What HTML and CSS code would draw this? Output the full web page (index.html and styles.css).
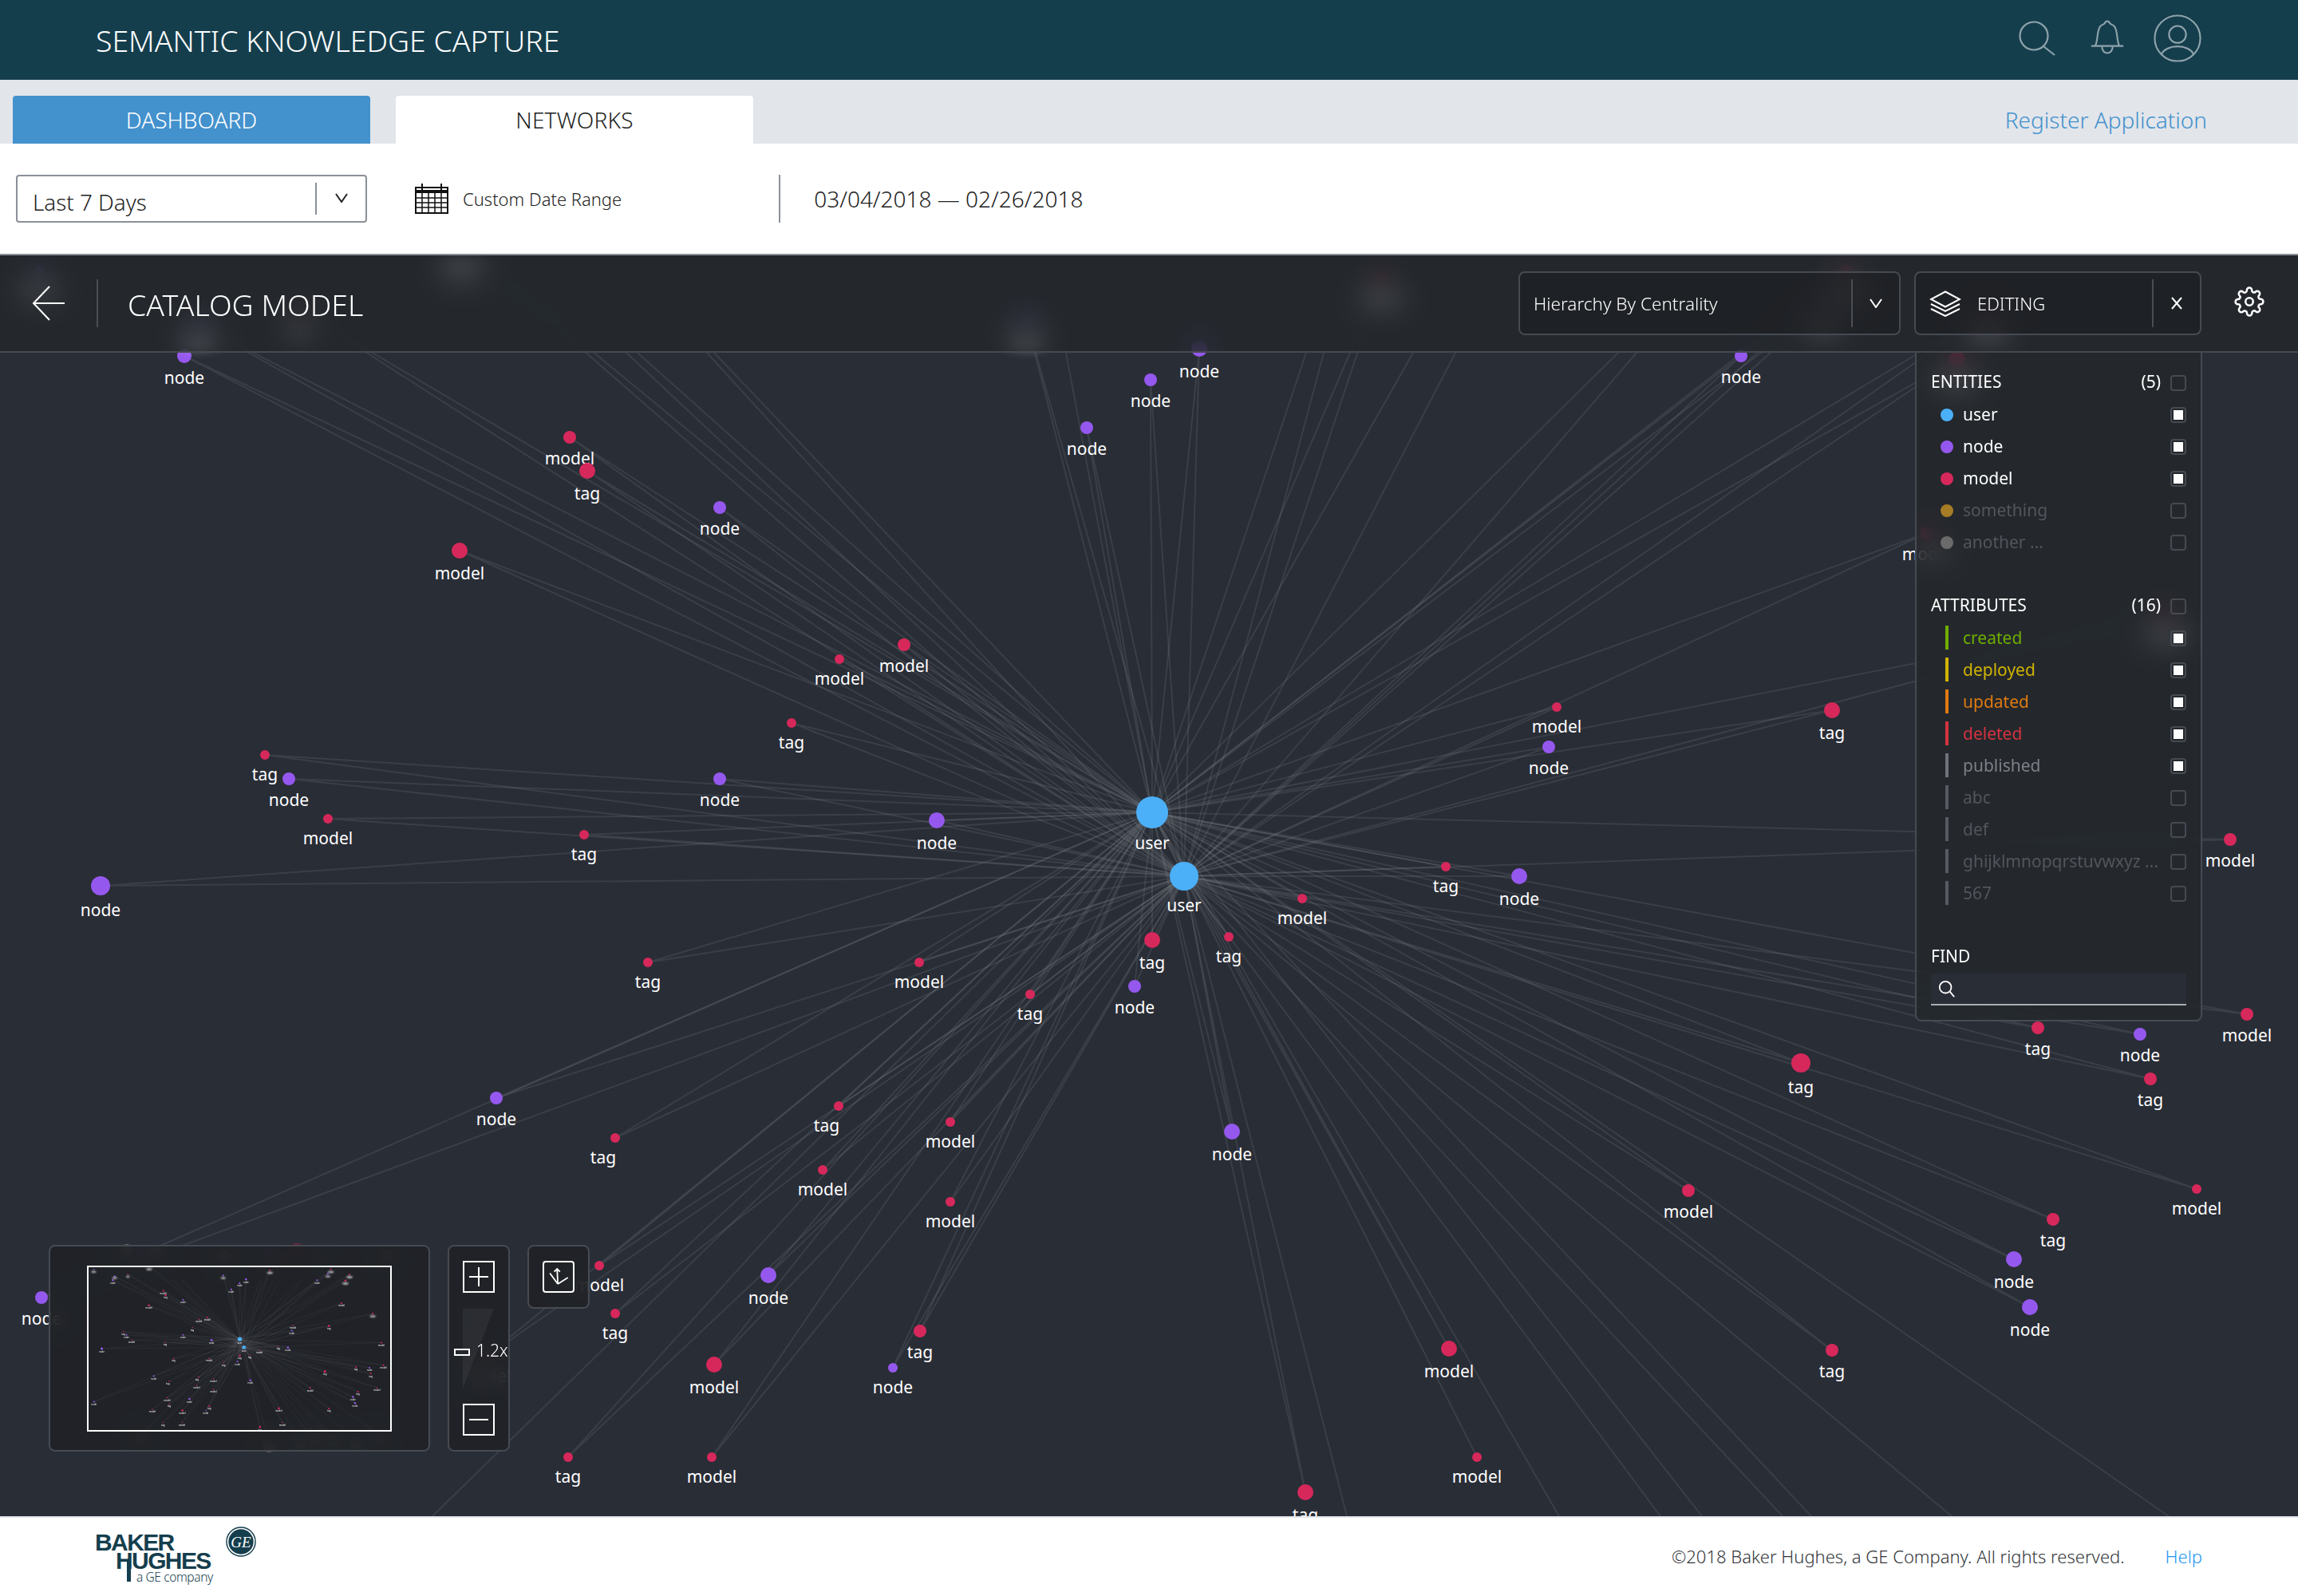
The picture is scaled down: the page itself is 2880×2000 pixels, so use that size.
FILE: index.html
```html
<!DOCTYPE html>
<html lang="en">
<head>
<meta charset="utf-8">
<title>Semantic Knowledge Capture</title>
<link rel="stylesheet" href="styles.css">
</head>
<body>
<div class="page">
  <header class="topbar">
    <div class="app-title">SEMANTIC KNOWLEDGE CAPTURE</div>
    <div class="top-icons">
      <svg class="ti ti-search" viewBox="0 0 60 60"><circle cx="25" cy="25" r="17.5"/><path d="M37 38L51 49"/></svg>
      <svg class="ti ti-bell" viewBox="0 0 48 50"><path d="M3 35H45M8 35C12 30 10 14 15 9C17 7 20 7 21 5C22 2 26 2 27 5C28 7 31 7 33 9C38 14 36 30 40 35"/><path d="M17 36C17 47 31 47 31 36"/></svg>
      <svg class="ti ti-user" viewBox="0 0 62 62"><circle cx="31" cy="31" r="29.5"/><circle cx="31" cy="26" r="11"/><path d="M10 52C16 38 46 38 52 52"/></svg>
    </div>
  </header>

  <nav class="tabstrip">
    <div class="tab tab-blue">DASHBOARD</div>
    <div class="tab tab-white">NETWORKS</div>
    <a class="register">Register Application</a>
  </nav>

  <section class="filters">
    <div class="range-select">
      <span class="range-text">Last 7 Days</span>
      <span class="range-div"></span>
      <span class="range-chev"><svg class="chev chev-dark" viewBox="0 0 16 12"><path d="M1 1L8 11L15 1"/></svg></span>
    </div>
    <svg class="cal" viewBox="0 0 42 38">
      <path class="cal-top" d="M1 5H41V37H1ZM9 0V8M33 0V8"/>
      <path class="cal-band" d="M1 8H41V12H1Z"/>
      <path class="cal-grid" d="M1 18H41M1 24H41M1 30H41M9 12V37M17 12V37M25 12V37M33 12V37"/>
    </svg>
    <span class="custom-label">Custom Date Range</span>
    <span class="filter-div"></span>
    <span class="date-range">03/04/2018 — 02/26/2018</span>
  </section>

  <main class="canvas">
    <svg class="graph" viewBox="0 320 2880 1580" aria-label="network graph">
      <g id="graph">
        <g class="edges">
          <path d="M1444 1018L231 446L1484 1098"/><path d="M1444 1018L714 548L1484 1098"/><path d="M1444 1018L736 590L1484 1098"/>
          <path d="M1444 1018L902 636L1484 1098"/><path d="M1444 1018L576 690L1484 1098"/><path d="M1444 1018L1133 808L1484 1098"/>
          <path d="M1444 1018L1052 826L1484 1098"/><path d="M1444 1018L992 906L1484 1098"/><path d="M1444 1018L332 946L1484 1098"/>
          <path d="M1444 1018L362 976L1484 1098"/><path d="M1444 1018L902 976L1484 1098"/><path d="M1444 1018L411 1026L1484 1098"/>
          <path d="M1444 1018L1174 1028L1484 1098"/><path d="M1444 1018L732 1046L1484 1098"/><path d="M1444 1018L126 1110L1484 1098"/>
          <path d="M1444 1018L1362 536L1484 1098"/><path d="M1444 1018L1442 476L1484 1098"/><path d="M1444 1018L1503 437L1484 1098"/>
          <path d="M1444 1018L2182 446L1484 1098"/><path d="M1444 1018L1951 886L1484 1098"/><path d="M1444 1018L1941 936L1484 1098"/>
          <path d="M1444 1018L2296 890L1484 1098"/><path d="M1444 1018L1812 1086L1484 1098"/><path d="M1444 1018L1904 1098L1484 1098"/>
          <path d="M1444 1018L2795 1052L1484 1098"/><path d="M1444 1018L812 1206L1484 1098"/><path d="M1444 1018L1152 1206L1484 1098"/>
          <path d="M1444 1018L1291 1246L1484 1098"/><path d="M1444 1018L1422 1236L1484 1098"/><path d="M1444 1018L1444 1178L1484 1098"/>
          <path d="M1444 1018L1540 1174L1484 1098"/><path d="M1444 1018L1632 1126L1484 1098"/><path d="M1444 1018L622 1376L1484 1098"/>
          <path d="M1444 1018L771 1426L1484 1098"/><path d="M1444 1018L1051 1386L1484 1098"/><path d="M1444 1018L1191 1406L1484 1098"/>
          <path d="M1444 1018L1031 1466L1484 1098"/><path d="M1444 1018L1191 1506L1484 1098"/><path d="M1444 1018L751 1586L1484 1098"/>
          <path d="M1444 1018L771 1646L1484 1098"/><path d="M1444 1018L963 1598L1484 1098"/><path d="M1444 1018L52 1626L1484 1098"/>
          <path d="M1444 1018L895 1710L1484 1098"/><path d="M1444 1018L1153 1668L1484 1098"/><path d="M1444 1018L1119 1714L1484 1098"/>
          <path d="M1444 1018L712 1826L1484 1098"/><path d="M1444 1018L892 1826L1484 1098"/><path d="M1444 1018L1544 1418L1484 1098"/>
          <path d="M1444 1018L2116 1492L1484 1098"/><path d="M1444 1018L2257 1332L1484 1098"/><path d="M1444 1018L2554 1288L1484 1098"/>
          <path d="M1444 1018L2682 1296L1484 1098"/><path d="M1444 1018L2816 1271L1484 1098"/><path d="M1444 1018L2695 1352L1484 1098"/>
          <path d="M1444 1018L2753 1490L1484 1098"/><path d="M1444 1018L2573 1528L1484 1098"/><path d="M1444 1018L2524 1578L1484 1098"/>
          <path d="M1444 1018L2544 1638L1484 1098"/><path d="M1444 1018L2296 1692L1484 1098"/><path d="M1444 1018L1816 1690L1484 1098"/>
          <path d="M1444 1018L1851 1826L1484 1098"/><path d="M1444 1018L1636 1870L1484 1098"/>
          <path d="M1444 1018L578 305L1484 1098"/><path d="M1444 1018L249 407L1484 1098"/><path d="M1444 1018L375 388L1484 1098"/>
          <path d="M1444 1018L1286 400L1484 1098"/><path d="M1444 1018L1732 349L1484 1098"/><path d="M1444 1018L2314 340L1484 1098"/>
          <path d="M1444 1018L2285 383L1484 1098"/><path d="M1444 1018L2492 390L1484 1098"/><path d="M1444 1018L2453 450L1484 1098"/>
          <path d="M1444 1018L2415 668L1484 1098"/><path d="M1444 1018L2714 770L1484 1098"/><path d="M1444 1018L609 1700L1484 1098"/>
          <path d="M785 442L1484 1098"/><path d="M799 442L1444 1018"/><path d="M886 442L1484 1098"/><path d="M895 442L1444 1018"/>
          <path d="M1336 442L1444 1018"/><path d="M1637 442L1444 1018"/><path d="M1659 442L1484 1098"/><path d="M1771 442L1444 1018"/>
          <path d="M1824 442L1484 1098"/><path d="M2028 442L1444 1018"/><path d="M2051 442L1484 1098"/>
          <path d="M542 1900L1444 1018"/><path d="M1688 1900L1484 1098"/><path d="M1954 1900L1444 1018"/><path d="M2081 1900L1484 1098"/>
          <path d="M2133 1900L1444 1018"/><path d="M2234 1900L1484 1098"/><path d="M2270 1900L1444 1018"/><path d="M2446 1900L1484 1098"/>
          <path d="M2718 1900L1444 1018"/>
          <path d="M1444 1018L1484 1098"/>
        </g>
        <g class="nodes">
          <circle class="c-node" cx="231" cy="446" r="9"/><text x="231" y="480">node</text>
          <circle class="c-model" cx="714" cy="548" r="8"/><text x="714" y="581">model</text>
          <circle class="c-model" cx="736" cy="590" r="10"/><text x="736" y="625">tag</text>
          <circle class="c-node" cx="902" cy="636" r="8"/><text x="902" y="669">node</text>
          <circle class="c-model" cx="576" cy="690" r="10"/><text x="576" y="725">model</text>
          <circle class="c-model" cx="1133" cy="808" r="8"/><text x="1133" y="841">model</text>
          <circle class="c-model" cx="1052" cy="826" r="6"/><text x="1052" y="857">model</text>
          <circle class="c-model" cx="992" cy="906" r="6"/><text x="992" y="937">tag</text>
          <circle class="c-model" cx="332" cy="946" r="6"/><text x="332" y="977">tag</text>
          <circle class="c-node" cx="362" cy="976" r="8"/><text x="362" y="1009">node</text>
          <circle class="c-node" cx="902" cy="976" r="8"/><text x="902" y="1009">node</text>
          <circle class="c-model" cx="411" cy="1026" r="6"/><text x="411" y="1057">model</text>
          <circle class="c-node" cx="1174" cy="1028" r="10"/><text x="1174" y="1063">node</text>
          <circle class="c-model" cx="732" cy="1046" r="6"/><text x="732" y="1077">tag</text>
          <circle class="c-node" cx="126" cy="1110" r="12"/><text x="126" y="1147">node</text>
          <circle class="c-node" cx="1362" cy="536" r="8"/><text x="1362" y="569">node</text>
          <circle class="c-node" cx="1442" cy="476" r="8"/><text x="1442" y="509">node</text>
          <circle class="c-node" cx="1503" cy="437" r="10"/><text x="1503" y="472">node</text>
          <circle class="c-node" cx="2182" cy="446" r="8"/><text x="2182" y="479">node</text>
          <circle class="c-model" cx="1951" cy="886" r="6"/><text x="1951" y="917">model</text>
          <circle class="c-node" cx="1941" cy="936" r="8"/><text x="1941" y="969">node</text>
          <circle class="c-model" cx="2296" cy="890" r="10"/><text x="2296" y="925">tag</text>
          <circle class="c-model" cx="1812" cy="1086" r="6"/><text x="1812" y="1117">tag</text>
          <circle class="c-node" cx="1904" cy="1098" r="10"/><text x="1904" y="1133">node</text>
          <circle class="c-model" cx="2795" cy="1052" r="8"/><text x="2795" y="1085">model</text>
          <circle class="c-model" cx="812" cy="1206" r="6"/><text x="812" y="1237">tag</text>
          <circle class="c-model" cx="1152" cy="1206" r="6"/><text x="1152" y="1237">model</text>
          <circle class="c-model" cx="1291" cy="1246" r="6"/><text x="1291" y="1277">tag</text>
          <circle class="c-node" cx="1422" cy="1236" r="8"/><text x="1422" y="1269">node</text>
          <circle class="c-model" cx="1444" cy="1178" r="10"/><text x="1444" y="1213">tag</text>
          <circle class="c-model" cx="1540" cy="1174" r="6"/><text x="1540" y="1205">tag</text>
          <circle class="c-model" cx="1632" cy="1126" r="6"/><text x="1632" y="1157">model</text>
          <circle class="c-user" cx="1444" cy="1018" r="20"/><text x="1444" y="1063">user</text>
          <circle class="c-user" cx="1484" cy="1098" r="18"/><text x="1484" y="1141">user</text>
          <circle class="c-node" cx="622" cy="1376" r="8"/><text x="622" y="1409">node</text>
          <circle class="c-model" cx="771" cy="1426" r="6"/><text x="756" y="1457">tag</text>
          <circle class="c-model" cx="1051" cy="1386" r="6"/><text x="1036" y="1417">tag</text>
          <circle class="c-model" cx="1191" cy="1406" r="6"/><text x="1191" y="1437">model</text>
          <circle class="c-model" cx="1031" cy="1466" r="6"/><text x="1031" y="1497">model</text>
          <circle class="c-model" cx="1191" cy="1506" r="6"/><text x="1191" y="1537">model</text>
          <circle class="c-model" cx="751" cy="1586" r="6"/><text x="751" y="1617">model</text>
          <circle class="c-model" cx="771" cy="1646" r="6"/><text x="771" y="1677">tag</text>
          <circle class="c-node" cx="963" cy="1598" r="10"/><text x="963" y="1633">node</text>
          <circle class="c-node" cx="52" cy="1626" r="8"/><text x="52" y="1659">node</text>
          <circle class="c-model" cx="895" cy="1710" r="10"/><text x="895" y="1745">model</text>
          <circle class="c-model" cx="1153" cy="1668" r="8"/><text x="1153" y="1701">tag</text>
          <circle class="c-node" cx="1119" cy="1714" r="6"/><text x="1119" y="1745">node</text>
          <circle class="c-model" cx="712" cy="1826" r="6"/><text x="712" y="1857">tag</text>
          <circle class="c-model" cx="892" cy="1826" r="6"/><text x="892" y="1857">model</text>
          <circle class="c-node" cx="1544" cy="1418" r="10"/><text x="1544" y="1453">node</text>
          <circle class="c-model" cx="2116" cy="1492" r="8"/><text x="2116" y="1525">model</text>
          <circle class="c-model" cx="2257" cy="1332" r="12"/><text x="2257" y="1369">tag</text>
          <circle class="c-model" cx="2554" cy="1288" r="8"/><text x="2554" y="1321">tag</text>
          <circle class="c-node" cx="2682" cy="1296" r="8"/><text x="2682" y="1329">node</text>
          <circle class="c-model" cx="2816" cy="1271" r="8"/><text x="2816" y="1304">model</text>
          <circle class="c-model" cx="2695" cy="1352" r="8"/><text x="2695" y="1385">tag</text>
          <circle class="c-model" cx="2753" cy="1490" r="6"/><text x="2753" y="1521">model</text>
          <circle class="c-model" cx="2573" cy="1528" r="8"/><text x="2573" y="1561">tag</text>
          <circle class="c-node" cx="2524" cy="1578" r="10"/><text x="2524" y="1613">node</text>
          <circle class="c-node" cx="2544" cy="1638" r="10"/><text x="2544" y="1673">node</text>
          <circle class="c-model" cx="2296" cy="1692" r="8"/><text x="2296" y="1725">tag</text>
          <circle class="c-model" cx="1816" cy="1690" r="10"/><text x="1816" y="1725">model</text>
          <circle class="c-model" cx="1851" cy="1826" r="6"/><text x="1851" y="1857">model</text>
          <circle class="c-model" cx="1636" cy="1870" r="10"/><text x="1636" y="1905">tag</text>
          <circle class="c-model" cx="2415" cy="668" r="8"/><text x="2415" y="701">model</text>
          <circle class="c-model" cx="609" cy="1700" r="6"/><text x="609" y="1731">model</text>
          <circle class="c-model" cx="578" cy="305" r="6"/><ellipse class="smudge" cx="578" cy="340" rx="28" ry="8"/>
          <circle class="c-node" cx="49" cy="340" r="6"/><ellipse class="smudge" cx="49" cy="364" rx="24" ry="8"/>
          <circle class="c-node" cx="249" cy="407" r="8"/><ellipse class="smudge" cx="249" cy="424" rx="24" ry="8"/>
          <circle class="c-model" cx="375" cy="388" r="6"/><ellipse class="smudge" cx="375" cy="412" rx="14" ry="8"/>
          <circle class="c-node" cx="1286" cy="400" r="8"/><ellipse class="smudge" cx="1286" cy="424" rx="24" ry="8"/>
          <circle class="c-model" cx="1732" cy="349" r="8"/><ellipse class="smudge" cx="1732" cy="375" rx="28" ry="8"/>
          <circle class="c-model" cx="2314" cy="340" r="8"/><ellipse class="smudge" cx="2314" cy="366" rx="28" ry="8"/>
          <circle class="c-node" cx="2285" cy="383" r="8"/><ellipse class="smudge" cx="2285" cy="409" rx="24" ry="8"/>
          <circle class="c-model" cx="2492" cy="390" r="8"/><ellipse class="smudge" cx="2492" cy="416" rx="28" ry="8"/>
          <circle class="c-model" cx="2453" cy="450" r="10"/><ellipse class="smudge" cx="2453" cy="478" rx="28" ry="8"/>
          <circle class="c-model" cx="2714" cy="770" r="8"/><ellipse class="smudge" cx="2714" cy="796" rx="28" ry="8"/>
        </g>
      </g>
      <g class="ghosts">
        <circle cx="159" cy="1567" r="8"/><circle class="g-node" cx="178" cy="1572" r="8"/><circle cx="194" cy="1570" r="8"/>
        <circle cx="281" cy="1575" r="8"/><circle class="g-node" cx="334" cy="1572" r="8"/><circle class="g-model" cx="356" cy="1577" r="8"/>
        <circle class="g-model" cx="372" cy="1565" r="8"/><circle class="g-node" cx="405" cy="1577" r="8"/><circle cx="485" cy="1575" r="8"/>
        <circle cx="178" cy="1800" r="8"/><circle class="g-model" cx="326" cy="1797" r="8"/><circle cx="337" cy="1812" r="8"/>
        <circle cx="375" cy="1808" r="8"/><circle cx="395" cy="1803" r="8"/><circle cx="418" cy="1805" r="8"/>
        <circle cx="446" cy="1808" r="8"/><circle cx="474" cy="1801" r="8"/>
      </g>
    </svg>

    <div class="canvas-head">
      <svg class="back" viewBox="0 0 42 44"><path d="M41 22H2M22 1L2 22L22 43"/></svg>
      <span class="head-div"></span>
      <h1 class="catalog">CATALOG MODEL</h1>
      <div class="dark-select hierarchy">
        <span class="ds-text">Hierarchy By Centrality</span>
        <span class="ds-div"></span>
        <span class="ds-end"><svg class="chev chev-light" viewBox="0 0 16 12"><path d="M1 1L8 11L15 1"/></svg></span>
      </div>
      <div class="dark-select editing">
        <svg class="layers" viewBox="0 0 40 33"><path d="M20 1.5L38 11L20 20.5L2 11Z"/><path d="M2 17L20 26L38 17"/><path d="M2 23L20 32L38 23"/></svg>
        <span class="ds-text editing-text">EDITING</span>
        <span class="ds-div"></span>
        <span class="ds-end"><svg class="close" viewBox="0 0 16 16"><path d="M2 1L14 15M14 1L2 15"/></svg></span>
      </div>
      <svg class="gear" viewBox="0 0 24 24"><circle cx="12" cy="12" r="3"/><path d="M19.4 15a1.65 1.65 0 0 0 .33 1.82l.06.06a2 2 0 0 1 0 2.83 2 2 0 0 1-2.83 0l-.06-.06a1.65 1.65 0 0 0-1.82-.33 1.65 1.65 0 0 0-1 1.51V21a2 2 0 0 1-2 2 2 2 0 0 1-2-2v-.09A1.65 1.65 0 0 0 9 19.4a1.65 1.65 0 0 0-1.82.33l-.06.06a2 2 0 0 1-2.83 0 2 2 0 0 1 0-2.83l.06-.06a1.65 1.65 0 0 0 .33-1.82 1.65 1.65 0 0 0-1.51-1H3a2 2 0 0 1-2-2 2 2 0 0 1 2-2h.09A1.65 1.65 0 0 0 4.6 9a1.65 1.65 0 0 0-.33-1.82l-.06-.06a2 2 0 0 1 0-2.83 2 2 0 0 1 2.83 0l.06.06a1.65 1.65 0 0 0 1.82.33H9a1.65 1.65 0 0 0 1-1.51V3a2 2 0 0 1 2-2 2 2 0 0 1 2 2v.09a1.65 1.65 0 0 0 1 1.51 1.65 1.65 0 0 0 1.82-.33l.06-.06a2 2 0 0 1 2.83 0 2 2 0 0 1 0 2.83l-.06.06a1.65 1.65 0 0 0-.33 1.82V9a1.65 1.65 0 0 0 1.51 1H21a2 2 0 0 1 2 2 2 2 0 0 1-2 2h-.09a1.65 1.65 0 0 0-1.51 1z"/></svg>
    </div>

    <aside class="legend">
      <div class="lg-row lg-head"><span class="lg-title">ENTITIES</span><span class="lg-count">(5)</span><span class="cb"></span></div>
      <div class="lg-row"><i class="dot d-user"></i><span class="lg-name">user</span><span class="cb on"></span></div>
      <div class="lg-row"><i class="dot d-node"></i><span class="lg-name">node</span><span class="cb on"></span></div>
      <div class="lg-row"><i class="dot d-model"></i><span class="lg-name">model</span><span class="cb on"></span></div>
      <div class="lg-row"><i class="dot d-something"></i><span class="lg-name off">something</span><span class="cb"></span></div>
      <div class="lg-row"><i class="dot d-another"></i><span class="lg-name off">another ...</span><span class="cb"></span></div>

      <div class="lg-row lg-head lg-gap"><span class="lg-title">ATTRIBUTES</span><span class="lg-count">(16)</span><span class="cb"></span></div>
      <div class="lg-row"><i class="bar b-created"></i><span class="lg-name t-created">created</span><span class="cb on"></span></div>
      <div class="lg-row"><i class="bar b-deployed"></i><span class="lg-name t-deployed">deployed</span><span class="cb on"></span></div>
      <div class="lg-row"><i class="bar b-updated"></i><span class="lg-name t-updated">updated</span><span class="cb on"></span></div>
      <div class="lg-row"><i class="bar b-deleted"></i><span class="lg-name t-deleted">deleted</span><span class="cb on"></span></div>
      <div class="lg-row"><i class="bar b-published"></i><span class="lg-name t-published">published</span><span class="cb on"></span></div>
      <div class="lg-row"><i class="bar b-off"></i><span class="lg-name off">abc</span><span class="cb"></span></div>
      <div class="lg-row"><i class="bar b-off"></i><span class="lg-name off">def</span><span class="cb"></span></div>
      <div class="lg-row"><i class="bar b-off"></i><span class="lg-name off">ghijklmnopqrstuvwxyz ...</span><span class="cb"></span></div>
      <div class="lg-row"><i class="bar b-off"></i><span class="lg-name off">567</span><span class="cb"></span></div>

      <div class="lg-row lg-head lg-gap"><span class="lg-title">FIND</span></div>
      <div class="find">
        <svg class="find-icon" viewBox="0 0 24 24"><circle cx="10" cy="10" r="8"/><path d="M16 16L22 23"/></svg>
      </div>
    </aside>

    <div class="dock">
      <div class="minimap panel">
        <div class="viewport">
          <svg class="mini-svg" viewBox="0 320 2880 1580" preserveAspectRatio="none"><use href="#graph"/></svg>
        </div>
      </div>
      <div class="zoombar panel">
        <span class="zbtn"><svg class="zglyph" viewBox="0 0 24 24"><path d="M0 12H24M12 0V24"/></svg></span>
        <div class="slider">
          <svg class="wedge" viewBox="0 0 40 100" preserveAspectRatio="none"><path d="M0 0H39L0 100Z"/></svg>
          <span class="handle"></span>
          <span class="zoom-val">1.2x</span>
        </div>
        <span class="zbtn"><svg class="zglyph" viewBox="0 0 24 24"><path d="M0 12H24"/></svg></span>
      </div>
      <div class="locate panel">
        <span class="lbtn"><svg class="axes" viewBox="0 0 40 40"><path d="M19 30L18 9M14 13L18 9L22 13M19 30L8 15M19 30L33 21"/></svg></span>
      </div>
    </div>
  </main>

  <footer class="footer">
    <div class="logo">
      <div class="logo-word">
        <span class="bh bh-baker">BAKER</span>
        <span class="bh bh-hughes">HUGHES</span>
        <span class="bh-stem"></span>
        <span class="bh-sub">a GE company</span>
      </div>
      <svg class="ge" viewBox="0 0 40 40"><circle class="ge-ring" cx="20" cy="20" r="19"/><circle class="ge-fill" cx="20" cy="20" r="16.5"/><text class="ge-text" x="20" y="27">GE</text></svg>
    </div>
    <div class="foot-right">
      <span class="copyright">©2018 Baker Hughes, a GE Company. All rights reserved.</span>
      <a class="help">Help</a>
    </div>
  </footer>
</div>
</body>
</html>
```
FILE: styles.css
```css
* { box-sizing: border-box; }
html, body { margin: 0; padding: 0; background: #fff; }
body { font-family: "Noto Sans", "Open Sans", sans-serif; color: #222; }
.page { width: 2880px; height: 2000px; display: flex; flex-direction: column; overflow: hidden; }

.topbar { height: 100px; background: #153e4d; display: flex; align-items: center; justify-content: space-between; padding: 0 121px 0 120px; flex: none; }
.app-title { font-size: 37.4px; font-weight: 300; color: #fff; }
.top-icons { display: flex; align-items: center; }
.ti { fill: none; stroke: #8ea3ab; stroke-width: 2.2; display: block; }
.ti-search { width: 60px; height: 60px; }
.ti-bell { width: 46px; height: 48px; margin-left: 34px; margin-top: -4px; }
.ti-user { width: 60px; height: 60px; margin-left: 35px; margin-top: -4px; }

.tabstrip { height: 80px; background: #e2e5ea; display: flex; align-items: flex-end; padding: 0 114px 0 16px; flex: none; }
.tab { width: 448px; height: 60px; display: flex; align-items: center; justify-content: center; font-size: 28px; font-weight: 300; border-radius: 4px 4px 0 0; margin-right: 32px; }
.tab-blue { background: #4391cd; color: #fff; }
.tab-white { background: #fff; color: #1d1f22; letter-spacing: 0.2px; }
.register { margin-left: auto; height: 60px; display: flex; align-items: center; color: #4391cd; font-size: 28px; font-weight: 300; }

.filters { height: 140px; background: #fff; border-bottom: 2px solid #8b9098; display: flex; align-items: center; padding: 0 0 0 20px; flex: none; }
.range-select { width: 440px; height: 60px; border: 2px solid #8b9098; border-radius: 4px; display: flex; align-items: center; padding-left: 19px; }
.range-text { flex: 1; font-size: 27.8px; font-weight: 300; margin-top: 8px; }
.range-div { width: 2px; height: 40px; background: #8b9098; }
.range-chev { width: 61px; display: flex; justify-content: center; }
.chev { width: 16px; height: 12px; fill: none; stroke-width: 2; display: block; }
.chev-dark { stroke: #222; margin-top: -2px; }
.chev-light { stroke: #fff; }
.cal { width: 42px; height: 38px; margin-left: 60px; fill: none; display: block; }
.cal-top { stroke: #111; stroke-width: 2; }
.cal-band { fill: #111; }
.cal-grid { stroke: #111; stroke-width: 1.5; }
.custom-label { font-size: 22px; font-weight: 300; margin-left: 18px; }
.filter-div { width: 2px; height: 60px; background: #8b9098; margin-left: 197px; }
.date-range { font-size: 28px; font-weight: 300; margin-left: 42px; }

.canvas { position: relative; height: 1580px; background: #292d36; overflow: hidden; flex: none; }
.graph { position: absolute; inset: 0; width: 2880px; height: 1580px; display: block; }
.edges path { fill: none; stroke: rgba(130, 135, 140, 0.2); stroke-width: var(--edge-w, 2); }
.nodes text { fill: #fff; font-size: 21px; text-anchor: middle; transform: translateY(0.5px); }
.nodes .smudge { fill: rgba(255, 255, 255, 0.9); filter: blur(9px); }
.c-user { fill: #4bb0f8; }
.c-node { fill: #9558ee; }
.c-model { fill: #d6285b; }
.ghosts circle { fill: #666; }
.ghosts .g-node { fill: #4a3c7c; }
.ghosts .g-model { fill: #552a3a; }

.canvas-head { position: absolute; top: 0; left: 0; width: 2880px; height: 122px; display: flex; align-items: center; padding-left: 40px; background: rgba(34, 38, 41, 0.7); backdrop-filter: blur(16px); border-bottom: 2px solid #464a50; }
.back { width: 42px; height: 44px; fill: none; stroke: #fff; stroke-width: 2; display: block; }
.head-div { width: 2px; height: 60px; background: #4a4d52; margin-left: 39px; }
.catalog { margin: 3px 0 0 37px; font-size: 37.4px; font-weight: 300; color: #fff; }
.dark-select { height: 80px; border: 2px solid #464a52; border-radius: 8px; background: rgba(28, 30, 34, 0.6); display: flex; align-items: center; padding-left: 17px; }
.hierarchy { width: 479px; margin-left: auto; }
.editing { width: 360px; margin-left: 17px; }
.ds-text { flex: 1; color: #fff; font-size: 22.5px; font-weight: 300; }
.ds-div { width: 2px; height: 60px; background: #4a4d52; }
.ds-end { width: 58px; display: flex; justify-content: center; }
.layers { width: 40px; height: 33px; fill: none; stroke: #fff; stroke-width: 2; display: block; }
.editing-text { margin-left: 20px; font-size: 22px; }
.close { width: 16px; height: 16px; fill: none; stroke: #fff; stroke-width: 2; display: block; }
.gear { width: 38px; height: 38px; margin: -4px 42px 0 41px; fill: none; stroke: #fff; stroke-width: 1.6; display: block; }

.legend { position: absolute; left: 2400px; top: 122px; width: 360px; height: 838px; padding: 18px 18px 0; background: rgba(34, 38, 41, 0.7); backdrop-filter: blur(16px); border: 2px solid #464a52; border-top: 0; border-radius: 0 0 8px 8px; }
.lg-row { height: 40px; display: flex; align-items: center; font-size: 21px; color: #fff; }
.lg-gap { margin-top: 40px; }
.lg-title { flex: 1; margin-top: -4px; }
.lg-count { margin: -4px 12px 0 0; }
.lg-name { flex: 1; margin: -3px 0 0 12px; white-space: nowrap; }
.bar + .lg-name { margin-left: 18px; }
.off { color: #52565d; }
.dot { width: 16px; height: 16px; border-radius: 50%; margin-left: 12px; flex: none; }
.d-user { background: #4bb0f8; }
.d-node { background: #9558ee; }
.d-model { background: #d6285b; }
.d-something { background: #a67c25; }
.d-another { background: #6b6b6b; }
.bar { width: 4px; height: 30px; margin-left: 18px; flex: none; margin-top: -2px; }
.b-created { background: #6fae00; }
.b-deployed { background: #d1b400; }
.b-updated { background: #e07a10; }
.b-deleted { background: #d4333f; }
.b-published { background: #6f737b; }
.b-off { background: #565a62; }
.t-created { color: #6fae00; }
.t-deployed { color: #d1b400; }
.t-updated { color: #e07a10; }
.t-deleted { color: #d4333f; }
.t-published { color: #7c8088; }
.cb { width: 20px; height: 20px; flex: none; border: 2px solid #464a52; border-radius: 4px; display: flex; align-items: center; justify-content: center; }
.cb.on::after { content: ""; width: 12px; height: 12px; background: #fff; }
.find { height: 40px; background: #292d36; border-bottom: 2px solid #a9adb4; display: flex; align-items: center; padding-left: 9px; }
.find-icon { width: 22px; height: 22px; fill: none; stroke: #fff; stroke-width: 2; display: block; }

.dock { position: absolute; left: 61px; top: 1240px; display: flex; gap: 22px; align-items: flex-start; }
.panel { border: 2px solid #464a52; border-radius: 8px; background: rgba(30, 33, 37, 0.85); backdrop-filter: blur(14px); }
.minimap { width: 478px; height: 259px; display: flex; align-items: center; justify-content: center; }
.viewport { width: 382px; height: 208px; border: 2px solid #fff; }
.mini-svg { --edge-w: 3.5; width: 100%; height: 100%; display: block; overflow: hidden; }
.zoombar { width: 78px; height: 259px; display: flex; flex-direction: column; align-items: center; padding: 18px 0; justify-content: space-between; }
.zbtn { width: 40px; height: 40px; border: 2px solid #fff; display: flex; align-items: center; justify-content: center; }
.zglyph { width: 24px; height: 24px; fill: none; stroke: #fff; stroke-width: 2; display: block; }
.slider { position: relative; width: 40px; height: 100px; }
.wedge { width: 40px; height: 100px; display: block; fill: rgba(255, 255, 255, 0.05); }
.handle { position: absolute; left: -11px; top: 50px; width: 20px; height: 9px; border: 2px solid #fff; background: #24282d; }
.zoom-val { position: absolute; left: 17px; top: 38px; font-size: 21px; font-weight: 300; color: #fff; }
.locate { width: 78px; height: 80px; display: flex; align-items: center; justify-content: center; }
.lbtn { width: 40px; height: 40px; border: 2px solid #fff; border-radius: 4px; display: block; }
.axes { width: 36px; height: 36px; fill: none; stroke: #fff; stroke-width: 2; display: block; }

.footer { height: 100px; background: #fff; border-top: 2px solid #e2e5ea; display: flex; align-items: center; justify-content: space-between; padding: 0 120px 0 119px; flex: none; }
.logo { display: flex; align-items: flex-start; }
.logo-word { position: relative; width: 148px; height: 70px; color: #153e4d; font-family: "Liberation Sans", sans-serif; }
.bh { position: absolute; font-weight: 700; font-size: 30px; line-height: 22px; letter-spacing: -1.6px; }
.bh-baker { left: 0; top: 6px; }
.bh-hughes { left: 26px; top: 29px; }
.bh-stem { position: absolute; left: 40px; top: 40px; width: 5px; height: 26px; background: #153e4d; }
.bh-sub { position: absolute; left: 52px; top: 52px; font-family: "Noto Sans", sans-serif; font-size: 15.5px; line-height: 16px; font-weight: 300; white-space: nowrap; letter-spacing: -0.4px; }
.ge { width: 38px; height: 38px; margin: -3px 0 0 16px; display: block; }
.ge-ring { fill: none; stroke: #153e4d; stroke-width: 1.5; }
.ge-fill { fill: #153e4d; }
.ge-text { fill: #fff; font-family: "Liberation Serif", serif; font-style: italic; font-size: 20px; text-anchor: middle; }
.foot-right { display: flex; align-items: center; margin-top: -2px; }
.copyright { font-size: 22px; font-weight: 300; color: #33363a; }
.help { font-size: 22px; font-weight: 300; color: #1e96f0; margin-left: 51px; }
```
